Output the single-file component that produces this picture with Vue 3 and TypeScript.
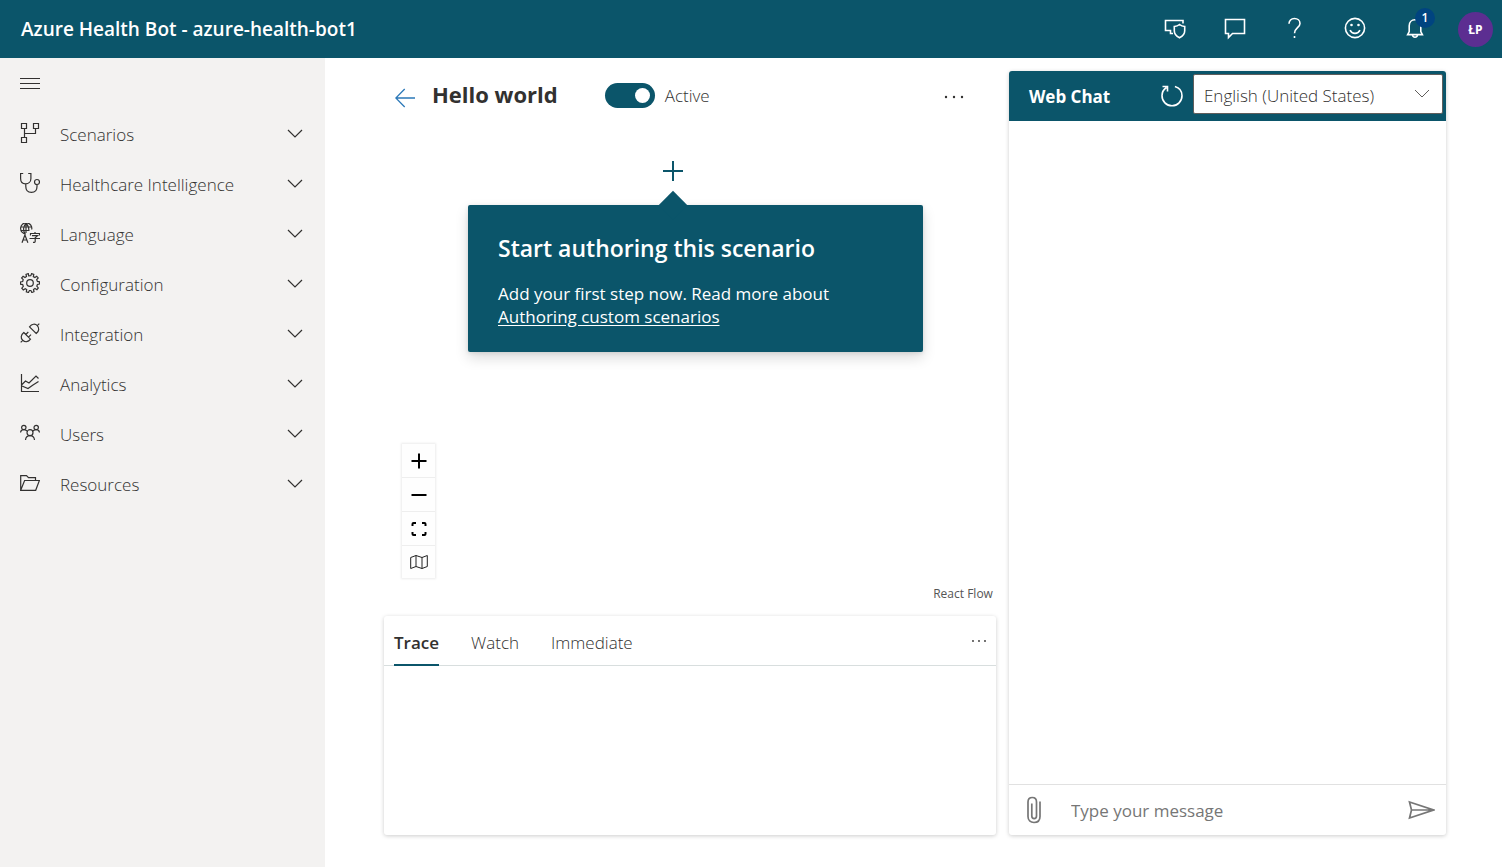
<script setup lang="ts">
import { ref } from 'vue'

interface NavItem {
  label: string
  icon: string
}

const navItems: NavItem[] = [
  { label: 'Scenarios', icon: 'flow' },
  { label: 'Healthcare Intelligence', icon: 'stethoscope' },
  { label: 'Language', icon: 'language' },
  { label: 'Configuration', icon: 'gear' },
  { label: 'Integration', icon: 'plug' },
  { label: 'Analytics', icon: 'chart' },
  { label: 'Users', icon: 'users' },
  { label: 'Resources', icon: 'folder' },
]

const tabs: string[] = ['Trace', 'Watch', 'Immediate']
const activeTab = ref<string>('Trace')
const active = ref<boolean>(true)
const language = ref<string>('en-US')
const message = ref<string>('')
</script>

<template>
  <div class="app">
    <header class="topbar">
      <h1 class="product">Azure Health Bot - azure-health-bot1</h1>
      <div class="top-actions">
        <button type="button" class="top-button" aria-label="Privacy">
          <svg width="24" height="24" viewBox="0 0 24 24" class="line">
            <path d="M10 16.500H7.500V13.500H2.500V3.500H20V6.500" />
            <path d="M16.500 7.500c-1.400 1.200-3.200 1.900-5.200 2v4.300c0 3.200 2.200 5.600 5.200 7 3-1.400 5.200-3.800 5.200-7v-4.300c-2-.1-3.800-.8-5.200-2z" />
          </svg>
        </button>
        <button type="button" class="top-button" aria-label="Feedback messages">
          <svg width="24" height="24" viewBox="0 0 24 24" class="line">
            <path d="M2.500 2.500H21.500V16.500H9.500L5.500 20.500V16.500H2.500Z" />
          </svg>
        </button>
        <button type="button" class="top-button" aria-label="Help">
          <svg width="24" height="24" viewBox="0 0 24 24" class="line">
            <path d="M6 6.800C6 3.600 8.200 1.500 11.400 1.500S17 3.500 17 6.500C17 10.500 11.500 11 11.500 16.200" />
            <path d="M11.500 19v2" />
          </svg>
        </button>
        <button type="button" class="top-button" aria-label="Send a smile">
          <svg width="24" height="24" viewBox="0 0 24 24" class="line">
            <circle cx="12" cy="11" r="9.600" />
            <path d="M7 13.200C8 15.300 9.800 16.400 12 16.400S16 15.300 17 13.200" />
            <circle cx="8.500" cy="8" r="1.300" class="solid" />
            <circle cx="15.500" cy="8" r="1.300" class="solid" />
          </svg>
        </button>
        <button type="button" class="top-button bell" aria-label="Notifications">
          <svg width="24" height="24" viewBox="0 0 24 24" class="line">
            <path d="M12 2.700C8.400 2.700 6.200 5.300 6.200 8.700V14.500L4.600 17.600H19.400L17.800 14.500V8.700C17.800 5.300 15.600 2.700 12 2.700Z" />
            <path d="M9.500 17.800C9.600 19.300 10.600 20.200 12 20.200S14.400 19.300 14.500 17.800" />
          </svg>
          <span class="count">1</span>
        </button>
        <button type="button" class="avatar" aria-label="Account">ŁP</button>
      </div>
    </header>

    <div class="body">
      <nav class="sidebar" aria-label="Main">
        <button type="button" class="menu-toggle" aria-label="Collapse menu">
          <svg width="20" height="12" viewBox="0 0 20 12" class="nav-line"><path d="M0 .5H20M0 5.500H20M0 10.500H20" /></svg>
        </button>
        <button v-for="item in navItems" :key="item.label" type="button" class="nav-item">
          <svg width="20" height="20" viewBox="0 0 20 20" class="nav-line nav-icon">
            <template v-if="item.icon === 'flow'">
              <path d="M1.500.5H6.500V5.500H1.500ZM13.500.5H18.500V5.500H13.500ZM1.500 14.500H6.500V19.500H1.500ZM4.500 5.500V14.500M4.500 10.500H15.500V5.500" />
            </template>
            <template v-else-if="item.icon === 'stethoscope'">
              <path d="M3.200.5H.6V5.500C.6 8.800 2.700 10.800 5.600 10.800S10.900 8.800 10.900 5.500V.5H8.200M5.800 10.800V13.500C5.800 17 8 19.400 11.400 19.400S17 17 17 13.500V11.600" />
              <circle cx="17" cy="9" r="2.500" />
            </template>
            <template v-else-if="item.icon === 'language'">
              <path d="M11.700 6.500A5.600 5.600 0 1 0 6 11M6 .5C3 3 3 8 5 10.500M6 .5C8.500 2.500 9 5 8.800 8M.8 4H11.200M.8 7.500H9.500M6 .5V10" />
              <path d="M2 19.800 4.900 12 7.900 19.800M3 17H6.800M10.500 12.500V10.500H19.500V12.500M15 9V10.500M12 12.700H17.500L15.200 14.700V18.300C15.200 19.200 14.600 19.500 13 19.400M9.500 15.500H20" />
            </template>
            <template v-else-if="item.icon === 'gear'">
              <path d="M8.700 2.800 8.300.6 6 1.300 6.500 3.500 5 4.500 3.100 3.200 1.600 5 3.200 6.700 2.700 8.500.5 8.900V11.200L2.700 11.600 3.300 13.400 1.800 15.200 3.300 17 5.200 15.700 6.700 16.600 6.300 18.800 8.500 19.500 9.400 17.500H10.900L11.800 19.500 14 18.700 13.500 16.500 15 15.500 16.900 16.700 18.300 14.900 16.800 13.200 17.400 11.500 19.500 11.100V8.800L17.400 8.400 16.700 6.700 18.200 4.900 16.700 3.200 14.900 4.500 13.300 3.600 13.800 1.400 11.600.6 10.800 2.700Z" />
              <circle cx="10" cy="10" r="3.300" />
            </template>
            <template v-else-if="item.icon === 'plug'">
              <path d="M.7 19.300 2.700 17.300M19.300.7 17.300 2.700M3.800 9.500 10.500 16.200C8.200 19.300 5 19.400 2.700 17.300S.8 11.800 3.800 9.500ZM9.500 3.800 16.200 10.500C19.300 8.200 19.400 5 17.300 2.700S11.800.8 9.500 3.800ZM5.800 11.500 8.300 9M8.500 14.200 11 11.700" />
            </template>
            <template v-else-if="item.icon === 'chart'">
              <path d="M1.500 1V18.500H19M2 11.500 5.500 8 9 10 16 3 18.500 5.500M2 13 8 15.500 13 12 18.500 8.500" />
            </template>
            <template v-else-if="item.icon === 'users'">
              <circle cx="3.800" cy="4.500" r="2.200" />
              <circle cx="16.200" cy="4.500" r="2.200" />
              <circle cx="10" cy="9.700" r="3" />
              <path d="M.5 9.500C.8 7.800 2 6.700 3.800 6.700S6.300 7.500 7.400 8.200M19.500 9.500C19.200 7.800 18 6.700 16.200 6.700S13.700 7.500 12.600 8.200M5.500 17C5.800 14.300 7.500 12.700 10 12.700S14.200 14.300 14.500 17" />
            </template>
            <template v-else>
              <path d="M.7 17.300V2.700H6.500L8.500 4.700H15.500V7.300M.7 17.300 4.600 7.500H19.400L15.700 17.300Z" />
            </template>
          </svg>
          <span class="nav-label">{{ item.label }}</span>
          <svg width="16" height="10" viewBox="0 0 16 10" class="nav-line chevron"><path d="M1 1 8 8 15 1" /></svg>
        </button>
      </nav>

      <main class="workspace">
        <section class="editor" aria-label="Scenario editor">
          <div class="title-row">
            <a href="#" class="back" aria-label="Back to scenarios">
              <svg width="20" height="20" viewBox="0 0 20 20"><path d="M9.700 1 .8 10 9.700 19M.8 10H20" /></svg>
            </a>
            <h2 class="title">Hello world</h2>
            <label class="switch">
              <input v-model="active" type="checkbox" role="switch" />
              <span>Active</span>
            </label>
            <button type="button" class="more" aria-label="More scenario actions">
              <svg width="20" height="4" viewBox="0 0 20 4"><circle cx="2" cy="2" r="1.200" /><circle cx="10" cy="2" r="1.200" /><circle cx="18" cy="2" r="1.200" /></svg>
            </button>
          </div>

          <div class="canvas">
            <button type="button" class="add-step" aria-label="Add step">
              <svg width="22" height="22" viewBox="0 0 22 22"><path d="M11 1V21M1 11H21" /></svg>
            </button>
            <div class="callout" role="dialog" aria-labelledby="callout-title">
              <h3 id="callout-title">Start authoring this scenario</h3>
              <p>Add your first step now. Read more about <a href="#">Authoring custom scenarios</a></p>
            </div>
            <div class="zoom-controls">
              <button type="button" aria-label="Zoom in">
                <svg width="16" height="16" viewBox="0 0 16 16"><path d="M8 .5V15.500M.5 8H15.500" class="thick" /></svg>
              </button>
              <button type="button" aria-label="Zoom out">
                <svg width="16" height="16" viewBox="0 0 16 16"><path d="M.5 8H15.500" class="thick" /></svg>
              </button>
              <button type="button" aria-label="Fit view">
                <svg width="16" height="16" viewBox="0 0 16 16"><path d="M1.500 5V3Q1.500 2 2.500 2H5M11 2H13.500Q14.500 2 14.500 3V5M14.500 11V13Q14.500 14 13.500 14H11M5 14H2.500Q1.500 14 1.500 13V11" class="thick" /></svg>
              </button>
              <button type="button" aria-label="Toggle map">
                <svg width="18" height="16" viewBox="0 0 18 16"><path d="M.7 3.500 6 1.500 12 3.500 17.300 1.500V12.500L12 14.500 6 12.500.7 14.500ZM6 1.500V12.500M12 3.500V14.500" class="thin" /></svg>
              </button>
            </div>
            <a href="#" class="attribution">React Flow</a>
          </div>

          <section class="trace card" aria-label="Debug output">
            <div class="tab-row" role="tablist">
              <button
                v-for="tab in tabs"
                :key="tab"
                type="button"
                role="tab"
                class="tab"
                :class="{ selected: activeTab === tab }"
                :aria-selected="activeTab === tab"
                @click="activeTab = tab"
              >
                {{ tab }}
              </button>
              <button type="button" class="more" aria-label="More trace actions">
                <svg width="14" height="4" viewBox="0 0 14 4"><circle cx="1" cy="2" r=".9" /><circle cx="7" cy="2" r=".9" /><circle cx="13" cy="2" r=".9" /></svg>
              </button>
            </div>
          </section>
        </section>

        <section class="chat card" aria-labelledby="chat-title">
          <div class="chat-head">
            <h2 id="chat-title">Web Chat</h2>
            <button type="button" class="restart" aria-label="Restart conversation">
              <svg width="24" height="24" viewBox="0 0 24 24"><path d="M6.500 3.500C3.700 5.300 2 8.300 2 11.700 2 17.300 6.500 21.800 12 21.800S22 17.300 22 11.700C22 7 18.900 3.500 14.900 2.400M2.500 2.500H7.500V7.500" /></svg>
            </button>
            <div class="language">
              <select v-model="language" aria-label="Chat language">
                <option value="en-US">English (United States)</option>
              </select>
              <svg width="16" height="10" viewBox="0 0 16 10" class="select-chevron"><path d="M1 1 8 8 15 1" /></svg>
            </div>
          </div>
          <div class="messages" role="log"></div>
          <form class="compose" @submit.prevent>
            <button type="button" class="compose-button" aria-label="Attach file">
              <svg width="16" height="28" viewBox="0 0 16 28" class="clip"><path d="M14 5.500V20.500C14 24.300 11.500 26.500 8 26.500S2 24.300 2 20.500V6C2 3.300 3.700 1.500 6.300 1.500S10.500 3.300 10.500 6V20C10.500 21.700 9.600 22.600 8.200 22.600S5.800 21.700 5.800 20V7.500" /></svg>
            </button>
            <input v-model="message" type="text" aria-label="Message" placeholder="Type your message" />
            <button type="submit" class="compose-button" aria-label="Send">
              <svg width="28" height="20" viewBox="0 0 28 20" class="send"><path d="M2.500 2 26.500 10 2.500 18 4.500 10ZM4.500 10H26" /></svg>
            </button>
          </form>
        </section>
      </main>
    </div>
  </div>
</template>

<style>
body {
  margin: 0;
}
</style>

<style scoped>
.app {
  --teal: #0b556a;
  display: flex;
  flex-direction: column;
  min-height: 100vh;
  background: #fff;
  color: #323130;
  font-family: "Open Sans", "Noto Sans", sans-serif;
  font-size: 17px;
}
* {
  box-sizing: border-box;
}
h1,
h2,
h3,
p {
  margin: 0;
}
button {
  padding: 0;
  border: 0;
  background: none;
  color: inherit;
  font: inherit;
  cursor: pointer;
}
svg {
  display: block;
  flex: none;
  fill: none;
}
.topbar {
  display: flex;
  align-items: center;
  justify-content: space-between;
  height: 58px;
  padding: 0 9px 0 21px;
  background: var(--teal);
  color: #fff;
}
.product {
  font-size: 19px;
  font-weight: 600;
}
.top-actions {
  display: flex;
  align-items: center;
}
.top-button {
  position: relative;
  display: grid;
  place-items: center;
  width: 60px;
  height: 58px;
}
.line {
  stroke: #fff;
  stroke-width: 1.600;
}
.solid {
  fill: #fff;
  stroke: none;
}
.count {
  position: absolute;
  top: 8px;
  right: 10px;
  width: 20px;
  height: 20px;
  border-radius: 50%;
  background: #004480;
  font-size: 12px;
  font-weight: 600;
  line-height: 20px;
}
.avatar {
  width: 35px;
  height: 35px;
  margin-left: 13px;
  border-radius: 50%;
  background: #5c2e91;
  font-size: 12px;
  font-weight: 700;
}
.body {
  display: flex;
  flex: 1;
}
.sidebar {
  flex: 0 0 325px;
  background: #f3f2f1;
}
.menu-toggle {
  display: flex;
  align-items: center;
  height: 52px;
  padding: 0 20px;
}
.nav-item {
  display: flex;
  align-items: center;
  gap: 20px;
  width: 100%;
  height: 50px;
  padding: 0 22px 0 20px;
  text-align: left;
  font-weight: 300;
}
.nav-label {
  flex: 1;
  padding-bottom: 2px;
}
.nav-line {
  stroke: #323130;
  stroke-width: 1.200;
}
.nav-icon {
  margin-bottom: 4px;
}
.chevron {
  margin-bottom: 2px;
}
.workspace {
  display: grid;
  flex: 1;
  grid-template-columns: minmax(0, 7fr) minmax(0, 5fr);
  gap: 13px;
  padding: 13px 56px 32px 59px;
}
.editor {
  display: flex;
  flex-direction: column;
}
.title-row {
  display: flex;
  align-items: center;
  height: 50px;
  padding: 0 32px 0 11px;
}
.back svg {
  margin-top: 4px;
  stroke: #2b78b8;
  stroke-width: 1.300;
}
.title {
  margin-left: 17px;
  padding-bottom: 4px;
  font-size: 22px;
  font-weight: 700;
}
.switch {
  display: flex;
  align-items: center;
  gap: 10px;
  margin-left: 47px;
  padding-bottom: 2px;
  font-weight: 300;
}
.switch input {
  display: flex;
  appearance: none;
  width: 50px;
  height: 25px;
  margin: 0;
  padding: 5px;
  border-radius: 13px;
  background: #8a8886;
}
.switch input::before {
  content: "";
  width: 15px;
  height: 15px;
  border-radius: 50%;
  background: #fff;
}
.switch input:checked {
  justify-content: flex-end;
  background: var(--teal);
}
.more {
  margin-left: auto;
}
.more svg {
  fill: #323130;
}
.title-row .more {
  padding-top: 2px;
}
.canvas {
  position: relative;
  flex: 1;
  min-height: 480px;
}
.add-step {
  position: absolute;
  top: 39px;
  left: 278px;
}
.add-step svg {
  stroke: var(--teal);
  stroke-width: 2;
}
.callout {
  position: absolute;
  top: 84px;
  left: 84px;
  width: 455px;
  padding: 26px 30px 24px;
  border-radius: 2px;
  background: var(--teal);
  box-shadow: 0 6px 14px rgba(0, 0, 0, 0.14), 0 1px 4px rgba(0, 0, 0, 0.1);
  color: #fff;
}
.callout::before {
  content: "";
  position: absolute;
  top: -10px;
  left: 195px;
  width: 20px;
  height: 20px;
  background: var(--teal);
  transform: rotate(45deg);
}
.callout h3 {
  margin-bottom: 17px;
  font-size: 23px;
  font-weight: 600;
  line-height: 34px;
}
.callout p {
  line-height: 23px;
}
.callout a {
  color: inherit;
  text-underline-offset: 2px;
}
.zoom-controls {
  position: absolute;
  bottom: 38px;
  left: 18px;
  width: 33px;
  background: #fefefe;
  box-shadow: 0 0 2px 1px rgba(0, 0, 0, 0.08);
}
.zoom-controls button {
  display: grid;
  place-items: center;
  width: 100%;
  height: 34px;
  border-bottom: 1px solid #eee;
}
.zoom-controls button:last-child {
  height: 32px;
  border-bottom: 0;
}
.thick {
  stroke: #000;
  stroke-width: 2;
}
.thin {
  stroke: #222;
  stroke-width: 1;
}
.attribution {
  position: absolute;
  right: 3px;
  bottom: 13px;
  color: #555;
  font-size: 12px;
  line-height: 18px;
  text-decoration: none;
}
.card {
  border-radius: 3px;
  background: #fff;
  box-shadow: 0 1px 4px rgba(0, 0, 0, 0.2);
}
.trace {
  height: 219px;
}
.tab-row {
  display: flex;
  gap: 32px;
  height: 50px;
  padding: 0 10px;
  border-bottom: 1px solid #d8dede;
}
.tab {
  height: 50px;
  padding-top: 4px;
  border-bottom: 2px solid transparent;
  font-weight: 300;
}
.tab.selected {
  border-color: var(--teal);
  font-weight: 600;
}
.chat {
  display: flex;
  flex-direction: column;
}
.chat-head {
  display: flex;
  align-items: center;
  height: 50px;
  padding: 3px 3px 7px 20px;
  border-radius: 3px 3px 0 0;
  background: var(--teal);
  color: #fff;
}
.chat-head h2 {
  flex: 1;
  padding-top: 4px;
  font-size: 17px;
  font-weight: 700;
}
.restart svg {
  margin: 4px 9px 0 0;
  stroke: #fff;
  stroke-width: 1.600;
}
.language {
  position: relative;
  width: 250px;
  height: 40px;
}
.language select {
  appearance: none;
  width: 100%;
  height: 100%;
  padding: 2px 36px 0 10px;
  border: 1px solid #605e5c;
  border-radius: 2px;
  background: #fff;
  color: #323130;
  font: inherit;
  font-weight: 300;
}
.select-chevron {
  position: absolute;
  top: 15px;
  right: 13px;
  stroke: #605e5c;
  stroke-width: 1;
  pointer-events: none;
}
.messages {
  flex: 1;
}
.compose {
  display: flex;
  align-items: center;
  height: 51px;
  border-top: 1px solid #e1e1e1;
}
.compose-button {
  display: grid;
  place-items: center;
  width: 50px;
  height: 50px;
  stroke: #767676;
  stroke-width: 1.700;
}
.compose input {
  flex: 1;
  min-width: 0;
  padding: 0 12px;
  border: 0;
  outline: 0;
  background: none;
  color: #323130;
  font: inherit;
}
.compose input::placeholder {
  color: #767676;
  opacity: 1;
}
</style>
